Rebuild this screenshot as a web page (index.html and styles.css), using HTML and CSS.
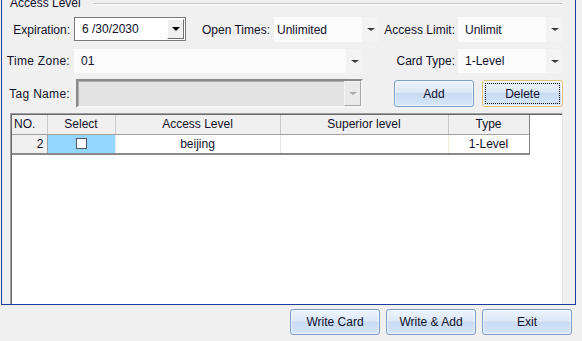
FILE: index.html
```html
<!DOCTYPE html>
<html>

<head>
    <title>Card Access Level</title>
    <link rel="stylesheet" href="styles.css">
</head>

<body>
    <div class="window">
        <div class="group-title">
            <span>Access Level</span>
            <i class="rule"></i>
        </div>

        <div class="row row-1">
            <label class="lbl w68">Expiration:</label>
            <div class="datebox">
                <span class="val">6 /30/2030</span>
                <span class="datebtn"><i class="arrow dark"></i></span>
            </div>
            <label class="lbl w84">Open Times:</label>
            <div class="combo w105 tight">
                <span class="val">Unlimited</span>
                <span class="drop"><i class="arrow"></i></span>
            </div>
            <label class="lbl w76">Access Limit:</label>
            <div class="combo w105 gap3">
                <span class="val">Unlimit</span>
                <span class="drop"><i class="arrow"></i></span>
            </div>
        </div>

        <div class="row row-2">
            <label class="lbl w68">Time Zone:</label>
            <div class="combo w289">
                <span class="val">01</span>
                <span class="drop"><i class="arrow"></i></span>
            </div>
            <label class="lbl w92">Card Type:</label>
            <div class="combo w105 gap3">
                <span class="val">1-Level</span>
                <span class="drop"><i class="arrow"></i></span>
            </div>
        </div>

        <div class="row row-3">
            <label class="lbl w68">Tag Name:</label>
            <div class="tagbox">
                <span class="tagbtn"><i class="arrow grey"></i></span>
            </div>
            <button class="btn btn-add">Add</button>
            <button class="btn btn-delete"><span>Delete</span></button>
        </div>

        <div class="grid">
            <table>
                <thead>
                    <tr>
                        <th class="c-no">NO.</th>
                        <th class="c-sel">Select</th>
                        <th class="c-level">Access Level</th>
                        <th class="c-sup">Superior level</th>
                        <th class="c-type">Type</th>
                    </tr>
                </thead>
                <tbody>
                    <tr>
                        <td class="c-no">2</td>
                        <td class="c-sel"><i class="check"></i></td>
                        <td class="c-level">beijing</td>
                        <td class="c-sup"></td>
                        <td class="c-type">1-Level</td>
                    </tr>
                </tbody>
            </table>
        </div>
    </div>

    <div class="actions">
        <button class="btn btn-wide">Write Card</button>
        <button class="btn btn-wide">Write &amp; Add</button>
        <button class="btn btn-wide">Exit</button>
    </div>
</body>

</html>
```

FILE: styles.css
```css
body {
    margin: 0;
    padding: 0;
    background-color: #f0f0f0;
    font-family: "Liberation Sans", Arial, sans-serif;
    font-size: 12px;
    color: #10102a;
    width: 582px;
    height: 341px;
    overflow: hidden;
}

/* main frame, its top edge is cut off by the screenshot */
.window {
    margin-left: 1px;
    margin-top: -2px;
    width: 573px;
    border: 1px solid #1a3f9c;
    border-top: none;
}

.group-title {
    display: flex;
    align-items: center;
    height: 11px;
    line-height: 11px;
    padding-left: 8px;
    margin-right: 13px;
}

.group-title .rule {
    flex: 1;
    margin-left: 12px;
    border-top: 1px solid #c8c8c8;
    border-bottom: 1px solid #ffffff;
}

.row {
    display: flex;
    align-items: center;
}

.row-1 {
    height: 25px;
    margin-top: 8px;
}

.row-2 {
    height: 24px;
    margin-top: 7px;
}

.row-3 {
    height: 29px;
    margin-top: 6px;
}

.lbl {
    text-align: right;
    flex: none;
    white-space: nowrap;
}

.w68 { width: 68px; }
.w76 { width: 76px; }
.w84 { width: 84px; }
.w92 { width: 92px; }

.row-2 .lbl.w68,
.row-3 .lbl.w68 {
    letter-spacing: 0.3px;
}

.combo {
    display: flex;
    align-items: center;
    height: 25px;
    margin-left: 4px;
    background-color: #fbfbfb;
    box-sizing: border-box;
}

.row-2 .combo {
    height: 24px;
}

.combo.w105 { width: 105px; }
.combo.w289 { width: 289px; }
.combo.gap3 { margin-left: 3px; }

.combo .val {
    flex: 1;
    padding-left: 7px;
}

.combo.tight .val {
    padding-left: 3px;
}

.combo .drop {
    width: 17px;
    align-self: stretch;
    background-color: #f3f3f3;
    display: flex;
    align-items: center;
    justify-content: center;
}

.arrow {
    display: block;
    width: 0;
    height: 0;
    border-left: 4px solid transparent;
    border-right: 4px solid transparent;
    border-top: 3px solid #3c3c3c;
}

.arrow.dark {
    border-top: 4px solid #000;
}

.arrow.grey {
    border-top-color: #a8a8a8;
}

.datebox {
    display: flex;
    align-items: center;
    width: 112px;
    height: 24px;
    margin-left: 4px;
    margin-bottom: 1px;
    box-sizing: border-box;
    border: 1px solid #7a7a7a;
    background-color: #fff;
}

.datebox .val {
    flex: 1;
    padding-left: 7px;
}

.datebtn {
    width: 17px;
    height: 20px;
    margin-right: 1px;
    box-sizing: border-box;
    background-color: #f0f0f0;
    border: 1px solid;
    border-color: #fff #707070 #707070 #fff;
    display: flex;
    align-items: center;
    justify-content: center;
}

.tagbox {
    display: flex;
    justify-content: flex-end;
    width: 287px;
    height: 29px;
    margin-left: 6px;
    box-sizing: border-box;
    background-color: #e3e3e3;
    border: 2px solid;
    border-color: #8a8a8a #f5f5f5 #f5f5f5 #8a8a8a;
    box-shadow: inset 1px 1px 0 #b0b0b0;
}

.tagbtn {
    width: 17px;
    box-sizing: border-box;
    border: 1px solid;
    border-color: #f4f4f4 #a8a8a8 #a8a8a8 #f4f4f4;
    background-color: #eaeaea;
    display: flex;
    align-items: center;
    justify-content: center;
}

/* blue win7 style buttons */
.btn {
    font-family: "Liberation Sans", Arial, sans-serif;
    font-size: 12px;
    color: #10102a;
    padding: 0;
    border: 1px solid #7c9dc8;
    border-radius: 3px;
    background: linear-gradient(#edf4fc 0%, #dde9f7 45%, #c7dbf3 50%, #d6e6f8 100%);
    box-shadow: inset 0 0 0 1px rgba(255, 255, 255, 0.6);
}

.btn-add {
    width: 80px;
    height: 27px;
    margin-left: 31px;
}

.btn-delete {
    width: 81px;
    height: 27px;
    margin-left: 8px;
    border-color: #e0c371;
    padding: 2px;
}

.btn-delete span {
    display: flex;
    align-items: center;
    justify-content: center;
    height: 100%;
    border: 1px dotted #000;
    box-sizing: border-box;
}

.grid {
    margin-left: 8px;
    margin-top: 5px;
    width: 553px;
    height: 191px;
    box-sizing: border-box;
    background-color: #fff;
    border-top: 1px solid #a0a0a0;
    border-left: 1px solid #a0a0a0;
    border-right: 1px solid #e3e3e3;
    box-shadow: inset 1px 1px 0 #696969;
    padding: 1px 0 0 1px;
}

table {
    border-collapse: collapse;
    table-layout: fixed;
    width: 517px;
}

th,
td {
    height: 19px;
    padding: 0;
    box-sizing: border-box;
    text-align: center;
    font-weight: normal;
    white-space: nowrap;
    overflow: hidden;
}

th {
    background-color: #f0f0f0;
    border-right: 1px solid #c8c8c8;
    border-bottom: 1px solid #a0a0a0;
}

td {
    height: 20px;
    border-right: 1px solid #e6e6e6;
    border-bottom: 2px solid #8a8a8a;
}

th.c-type,
td.c-type {
    border-right: 1px solid #808080;
}

td.c-sup {
    border-right-color: #f3ecd2;
}

.c-no { width: 35px; text-align: left; padding-left: 2px; }
.c-sel { width: 68px; }
.c-level { width: 165px; }
.c-sup { width: 168px; }
.c-type { width: 81px; }

td.c-no {
    text-align: right;
    padding: 0 3px 0 0;
    background-color: #f0f0f0;
    border-right-color: #a0a0a0;
}

td.c-sel {
    background-color: #93d6ff;
}

.check {
    display: block;
    margin: 0 auto;
    width: 11px;
    height: 11px;
    box-sizing: border-box;
    background-color: #fff;
    border: 1px solid #555;
}

.actions {
    display: flex;
    justify-content: flex-end;
    gap: 6px;
    padding-right: 10px;
    margin-top: 4px;
}

.btn-wide {
    width: 90px;
    height: 26px;
}
```
